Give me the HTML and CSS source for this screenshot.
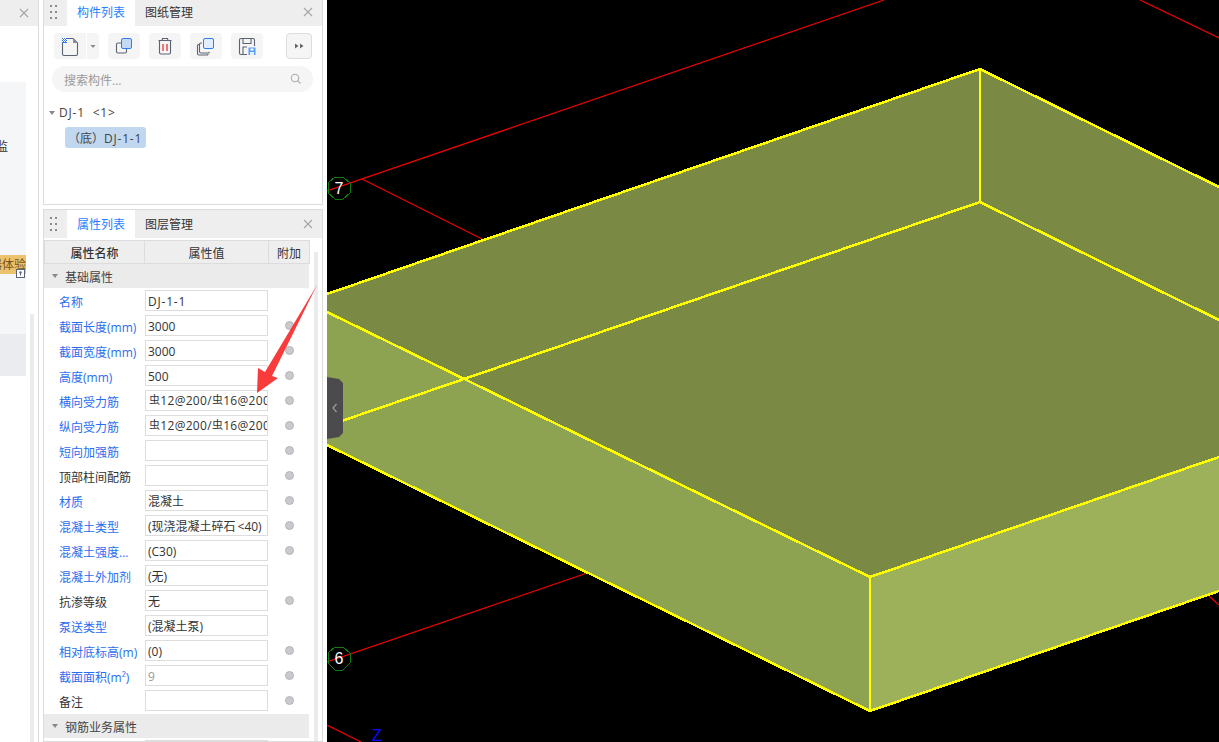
FILE: index.html
```html
<!DOCTYPE html>
<html lang="zh">
<head>
<meta charset="utf-8">
<title>构件列表</title>
<link rel="stylesheet" href="styles.css">
</head>
<body>
<div class="app">
  <aside class="strip">
    <div class="strip-head"><svg class="close" viewBox="0 0 10 10"><path d="M1 1l8 8M9 1l-8 8"/></svg></div>
    <div class="strip-main">
      <div class="nav">
        <div class="nav-box">
          <div class="nav-text">监</div>
          <div class="nav-tag"><span>器体验</span>
            <svg class="lock" viewBox="0 0 9 9"><rect x="0.5" y="0.5" width="8" height="8" fill="#fff" stroke="#5a6478"/><circle cx="4.5" cy="3.5" r="1.2" fill="#5a6478"/><path d="M4.5 4v2.5" stroke="#5a6478"/></svg>
          </div>
          <div class="nav-active"></div>
        </div>
        <div class="nav-scroll"></div>
      </div>
    </div>
  </aside>

  <div class="mid">
    <section class="panel panel-list">
      <header class="panel-head">
        <svg class="grip" viewBox="0 0 7 14"><g fill="#8a8a8a"><rect width="2" height="2"/><rect x="5" width="2" height="2"/><rect y="6" width="2" height="2"/><rect x="5" y="6" width="2" height="2"/><rect y="12" width="2" height="2"/><rect x="5" y="12" width="2" height="2"/></g></svg>
        <div class="tab tab-on">构件列表</div>
        <div class="tab">图纸管理</div>
        <svg class="close close-panel" viewBox="0 0 10 10"><path d="M1 1l8 8M9 1l-8 8"/></svg>
      </header>
      <div class="toolbar">
        <div class="tool tool-new">
          <svg viewBox="0 0 32 26" class="ico"><path d="M8.500 5.500H19l4.500 4.500v11a1.500 1.500 0 0 1-1.500 1.500H10a1.500 1.500 0 0 1-1.500-1.500z" fill="none" stroke="#5b6270" stroke-width="1.100"/><path d="M19 5.500v4.500h4.500z" fill="#8a8f99"/><rect x="8" y="5" width="5" height="5" fill="#2f7cf0"/><g fill="#fff"><rect x="9" y="5" width="1" height="1"/><rect x="11" y="5" width="1" height="1"/><rect x="8" y="6" width="1" height="1"/><rect x="10" y="6" width="1" height="1"/><rect x="12" y="6" width="1" height="1"/><rect x="9" y="7" width="1" height="1"/><rect x="11" y="7" width="1" height="1"/><rect x="8" y="8" width="1" height="1"/><rect x="10" y="8" width="1" height="1"/><rect x="12" y="8" width="1" height="1"/></g></svg>
        </div>
        <div class="tool tool-caret"><svg viewBox="0 0 12 26" class="ico"><path d="M3.500 12h5L6 15z" fill="#888"/></svg></div>
        <div class="tool tool-a">
          <svg viewBox="0 0 32 26" class="ico"><path d="M13 10H10a1.500 1.500 0 0 0-1.500 1.500v7A1.500 1.500 0 0 0 10 20h7a1.500 1.500 0 0 0 1.500-1.500V16" fill="none" stroke="#5b6270" stroke-width="1.100"/><rect x="13.500" y="5.500" width="10" height="10" rx="1.500" fill="#c3d9f6" stroke="#2f7cf0"/></svg>
        </div>
        <div class="tool tool-b">
          <svg viewBox="0 0 32 26" class="ico"><path d="M13 7.500l.5-2h5l.5 2M9.500 7.500h13M10.500 8v11.500a1.500 1.500 0 0 0 1.500 1.500h8a1.500 1.500 0 0 0 1.500-1.500V8" fill="none" stroke="#5b6270" stroke-width="1.100"/><path d="M14 11v7M18 11v7" stroke="#e8232a" stroke-width="1.200"/></svg>
        </div>
        <div class="tool tool-b">
          <svg viewBox="0 0 32 26" class="ico"><path d="M12 10H11a1.500 1.500 0 0 0-1.500 1.500v7A1.500 1.500 0 0 0 11 20h7a1.500 1.500 0 0 0 1.500-1M9.500 11.500H8.500a1 1 0 0 0-1 1v8a1.500 1.500 0 0 0 1.500 1.500h8a1 1 0 0 0 1-1" fill="none" stroke="#5b6270" stroke-width="1.100"/><rect x="13.500" y="5.500" width="10" height="10" rx="1.500" fill="#e3eefc" stroke="#2f7cf0"/></svg>
        </div>
        <div class="tool tool-b">
          <svg viewBox="0 0 32 26" class="ico"><path d="M16 21.500H10a1.500 1.500 0 0 1-1.500-1.500V7A1.500 1.500 0 0 1 10 5.500h12A1.500 1.500 0 0 1 23.500 7v6M12 5.500V10.500h8V5.500M12 21V14h4" fill="none" stroke="#5b6270" stroke-width="1.100"/><rect x="17.500" y="14.500" width="7" height="7.500" fill="#5b9cf5"/><rect x="19.500" y="15.500" width="3" height="2" fill="#fff"/><rect x="19" y="19" width="4" height="3" fill="#e3eefc"/></svg>
        </div>
        <div class="tool tool-more"><svg viewBox="0 0 24 24" class="ico"><path d="M8 9.500l3.500 2.500-3.500 2.500zM13 9.500l3.500 2.500-3.500 2.500z" fill="#666"/></svg></div>
      </div>
      <div class="search">
        <span class="search-text">搜索构件...</span>
        <svg class="search-ico" viewBox="0 0 12 12"><circle cx="5" cy="5" r="3.700" fill="none" stroke="#aaa" stroke-width="1.100"/><path d="M7.800 7.800L10.500 10.500" stroke="#aaa" stroke-width="1.200"/></svg>
      </div>
      <div class="tree">
        <div class="tree-parent"><i class="caret"></i><span class="wide">DJ-1&nbsp;&nbsp;&lt;1&gt;</span></div>
        <div class="tree-child">（底）<span class="wide">DJ-1-1</span></div>
      </div>
    </section>

    <section class="panel panel-props">
      <header class="panel-head panel-head-tall">
        <svg class="grip" viewBox="0 0 7 14"><g fill="#8a8a8a"><rect width="2" height="2"/><rect x="5" width="2" height="2"/><rect y="6" width="2" height="2"/><rect x="5" y="6" width="2" height="2"/><rect y="12" width="2" height="2"/><rect x="5" y="12" width="2" height="2"/></g></svg>
        <div class="tab tab-on">属性列表</div>
        <div class="tab">图层管理</div>
        <svg class="close close-panel" viewBox="0 0 10 10"><path d="M1 1l8 8M9 1l-8 8"/></svg>
      </header>
      <div class="props">
        <div class="table">
          <div class="thead">
            <div class="th th-name">属性名称</div>
            <div class="th th-val">属性值</div>
            <div class="th th-add">附加</div>
          </div>
          <div class="group"><i class="caret"></i><span class="group-text">基础属性</span></div>
          <div class="row"><label class="link">名称</label><div class="val"><span class="wide">DJ-1-1</span></div></div>
          <div class="row"><label class="link">截面长度(mm)</label><div class="val">3000</div><i class="dot"></i></div>
          <div class="row"><label class="link">截面宽度(mm)</label><div class="val">3000</div><i class="dot"></i></div>
          <div class="row"><label class="link">高度(mm)</label><div class="val">500</div><i class="dot"></i></div>
          <div class="row"><label class="link">横向受力筋</label><div class="val val-rebar"><b>虫</b>12@200/<b>虫</b>16@200</div><i class="dot"></i></div>
          <div class="row"><label class="link">纵向受力筋</label><div class="val val-rebar"><b>虫</b>12@200/<b>虫</b>16@200</div><i class="dot"></i></div>
          <div class="row"><label class="link">短向加强筋</label><div class="val"></div><i class="dot"></i></div>
          <div class="row"><label>顶部柱间配筋</label><div class="val"></div><i class="dot"></i></div>
          <div class="row"><label class="link">材质</label><div class="val">混凝土</div><i class="dot"></i></div>
          <div class="row"><label class="link">混凝土类型</label><div class="val">(现浇混凝土碎石&#8201;&lt;40)</div><i class="dot"></i></div>
          <div class="row"><label class="link">混凝土强度...</label><div class="val">(C30)</div><i class="dot"></i></div>
          <div class="row"><label class="link">混凝土外加剂</label><div class="val">(无)</div></div>
          <div class="row"><label>抗渗等级</label><div class="val">无</div><i class="dot"></i></div>
          <div class="row"><label class="link">泵送类型</label><div class="val">(混凝土泵)</div></div>
          <div class="row"><label class="link">相对底标高(m)</label><div class="val">(0)</div><i class="dot"></i></div>
          <div class="row"><label class="link">截面面积(m²)</label><div class="val val-muted">9</div><i class="dot"></i></div>
          <div class="row"><label>备注</label><div class="val"></div><i class="dot"></i></div>
          <div class="group group-2"><i class="caret"></i><span class="group-text">钢筋业务属性</span></div>
          <div class="row"><label></label><div class="val"></div></div>
        </div>
        <div class="scrollbar"></div>
      </div>
    </section>
  </div>

  <main class="canvas">
    <svg class="scene" viewBox="327 0 892 742" shape-rendering="crispEdges">
      <g stroke="#f00000" stroke-width="1.200" fill="none" shape-rendering="auto">
        <path d="M327 191L884 0M1140 0L1219 38M362 179L482 239M327 662L587 573M327 725L361 742M1209 596L1219 605"/>
      </g>
      <polygon points="980,69 1219,187 1219,457 870,577 327,312 327,294" fill="#7a8a45"/>
      <polygon points="327,312 870,577 870,711 327,445" fill="#8da351"/>
      <polygon points="870,577 1219,457 1219,591 870,711" fill="#9cb15a"/>
      <g stroke="#ffff00" fill="none" stroke-width="2.500">
        <path d="M327 294L980 69L1219 187"/>
        <path d="M327 426L980 202L1219 320"/>
        <path d="M327 312L870 577L1219 457"/>
        <path d="M327 445L870 711L1219 591"/>
      </g>
      <path d="M980 69V202M870 577V711" stroke="#ffff00" fill="none" stroke-width="2"/>
      <g fill="none" stroke="#0f7a0f" stroke-width="1">
        <polygon points="335,177 343,177 350,183 350,193 343,199 335,199 328,193 328,183"/>
        <polygon points="335,647 343,647 350,653 350,663 343,670 335,670 328,663 328,653"/>
      </g>
      <text x="339" y="194" class="axis">7</text>
      <text x="339" y="664" class="axis">6</text>
      <text x="377" y="741" class="axis-z">Z</text>
    </svg>
    <div class="handle"><svg viewBox="0 0 16 62" class="handle-ico"><path d="M9.500 27L6 31l3.500 4" fill="none" stroke="#9a9a9a" stroke-width="1.200"/></svg></div>
  </main>

  <svg class="arrow" viewBox="0 0 80 120"><polygon points="67,5 22,96 28,98 7,113 8,88 15,92" fill="#f93b3b"/></svg>
</div>
</body>
</html>
```
FILE: styles.css
```css
* { box-sizing: border-box; }
html, body { margin: 0; padding: 0; height: 742px; overflow: hidden; background: #fff; }
body { font-family: "Open Sans", "Noto Sans CJK SC", "Noto Sans", sans-serif; font-size: 12px; color: #333; }

.app { position: relative; display: flex; width: 1219px; height: 742px; overflow: hidden; }
.wide { letter-spacing: 0.8px; }

/* left strip */
.strip { width: 39px; flex: none; border-right: 1px solid #dcdcdc; display: flex; flex-direction: column; }
.strip-head { height: 26px; background: #eeeeef; display: flex; align-items: center; justify-content: flex-end; padding-right: 9px; flex: none; }
.close { width: 10px; height: 10px; fill: none; stroke: #a6a6a6; stroke-width: 1.1; }
.strip-main { flex: 1; }
.nav { display: flex; height: 716px; }
.nav-box { width: 26px; height: 294px; margin-top: 56px; background: #f5f6f8; display: flex; flex-direction: column; position: relative; flex: none; }
.nav-text { height: 22px; margin-top: 54px; line-height: 22px; text-align: right; margin-right: 18px; overflow: hidden; direction: rtl; color: #333; }
.nav-tag { height: 19px; margin-top: 97px; background: #ecc26e; color: #7a5416; display: flex; justify-content: flex-end; overflow: visible; line-height: 19px; white-space: nowrap; position: relative; }
.lock { position: absolute; right: 1px; bottom: -4px; width: 9px; height: 9px; }
.nav-tag span { display: block; width: 26px; overflow: hidden; direction: rtl; text-align: right; }
.nav-active { height: 42px; margin-top: 60px; background: #ebecf0; }
.nav-scroll { width: 4px; margin-left: 4px; margin-top: 288px; height: 428px; background: #ebebeb; flex: none; }

/* middle panels */
.mid { width: 280px; margin-left: 4px; flex: none; display: flex; flex-direction: column; }
.panel { border: 1px solid #dcdcdc; background: #fff; width: 280px; }
.panel-list { height: 205px; border-top: 0; }
.panel-props { height: 533px; margin-top: 4px; overflow: hidden; }
.panel-head { height: 26px; background: #eeeeef; display: flex; align-items: stretch; position: relative; padding-left: 23px; }
.panel-head-tall { height: 28px; }
.grip { position: absolute; left: 6px; top: 5px; width: 7px; height: 14px; }
.panel-head-tall .grip { top: 7px; }
.tab { width: 68px; display: flex; align-items: center; justify-content: center; color: #333; padding-bottom: 2px; }
.panel-head-tall .tab { padding-bottom: 1px; }
.tab-on { background: #fff; color: #1f7fff; }
.close-panel { position: absolute; right: 9px; top: 7px; }
.panel-head-tall .close-panel { top: 9px; }

.toolbar { display: flex; height: 26px; margin-top: 7px; padding-left: 10px; }
.tool { height: 26px; background: #f5f5f6; border-radius: 4px; flex: none; }
.ico { display: block; width: 100%; height: 100%; }
.tool-new { width: 32px; border-radius: 4px 0 0 4px; }
.tool-caret { width: 12px; margin-left: 1px; border-radius: 0 4px 4px 0; }
.tool-a { width: 32px; margin-left: 9px; }
.tool-b { width: 32px; margin-left: 9px; }
.tool-more { width: 26px; margin-left: 23px; border: 1px solid #dddddd; }

.search { height: 26px; margin: 7px 9px 0 8px; background: #f5f5f6; border-radius: 13px; display: flex; align-items: center; justify-content: space-between; padding: 0 11px 0 12px; color: #9a9a9a; }
.search-text { padding-top: 1px; }
.search-ico { width: 12px; height: 12px; }

.tree { margin-top: 11px; padding-left: 5px; }
.tree-parent { height: 20px; line-height: 22px; display: flex; align-items: center; color: #444; }
.caret { display: inline-block; width: 0; height: 0; border: 3px solid transparent; border-top: 4px solid #888; border-bottom: 0; margin-right: 4px; flex: none; }
.tree-child { width: 81px; height: 21px; margin: 4px 0 0 16px; background: #c1d7f0; border-radius: 3px; line-height: 23px; color: #444; white-space: nowrap; text-indent: 3px; overflow: hidden; }

/* property table */
.props { display: flex; height: 504px; }
.table { width: 266px; flex: none; margin-top: 2px; }
.thead { display: grid; grid-template-columns: 100px 124px 42px; height: 24px; background: #eeeeef; border-top: 1px solid #dcdcdc; border-bottom: 1px solid #dcdcdc; }
.th { display: flex; align-items: center; justify-content: center; border-left: 1px solid #dcdcdc; font-weight: 500; color: #333; padding-top: 1px; }
.th-val, .th-add { font-weight: 400; }
.th-add { border-right: 1px solid #dcdcdc; }
.group { height: 24px; background: #ebebeb; display: flex; align-items: center; padding-left: 8px; color: #444; margin-right: 1px; }
.group .caret { margin-right: 7px; }
.group-text { padding-top: 2px; }
.row { display: grid; grid-template-columns: 101px 123px 42px; height: 25px; align-items: center; white-space: nowrap; }
.row label { padding: 2px 0 0 15px; overflow: hidden; color: #333; }
.row label.link { color: #2a6df0; }
.val { height: 21px; border: 1px solid #dddddd; line-height: 21px; padding-left: 2px; background: #fff; overflow: hidden; color: #333; white-space: nowrap; }
.val-rebar { padding-left: 3px; letter-spacing: 0.3px; line-height: 20px; }
.val-rebar b { font-weight: 400; font-size: 11px; position: relative; top: -1px; }
.val-muted { color: #999; }
.dot { width: 9px; height: 9px; border-radius: 50%; background: #c9cacd; border: 1px solid #b5b6b9; margin-left: 17px; }
.group-2 { margin-top: 1px; }
.scrollbar { width: 4px; margin-left: 4px; margin-top: 14px; background: #ebebeb; flex: none; height: 490px; }

/* canvas */
.canvas { width: 892px; margin-left: 4px; flex: none; background: #000; position: relative; }
.scene { display: block; width: 892px; height: 742px; }
.axis { fill: #fff; font-family: "Liberation Sans", sans-serif; font-size: 16px; text-anchor: middle; }
.axis-z { fill: #0a0aff; font-family: "Liberation Sans", sans-serif; font-size: 16px; text-anchor: middle; }
.handle { position: absolute; left: 0; top: 377px; width: 16px; height: 62px; background: #4b4b4d; clip-path: polygon(0 0, 12px 2px, 16px 6px, 16px 56px, 12px 60px, 0 62px); }
.handle-ico { display: block; width: 16px; height: 62px; }

.arrow { position: absolute; left: 250px; top: 280px; width: 80px; height: 120px; }
```
